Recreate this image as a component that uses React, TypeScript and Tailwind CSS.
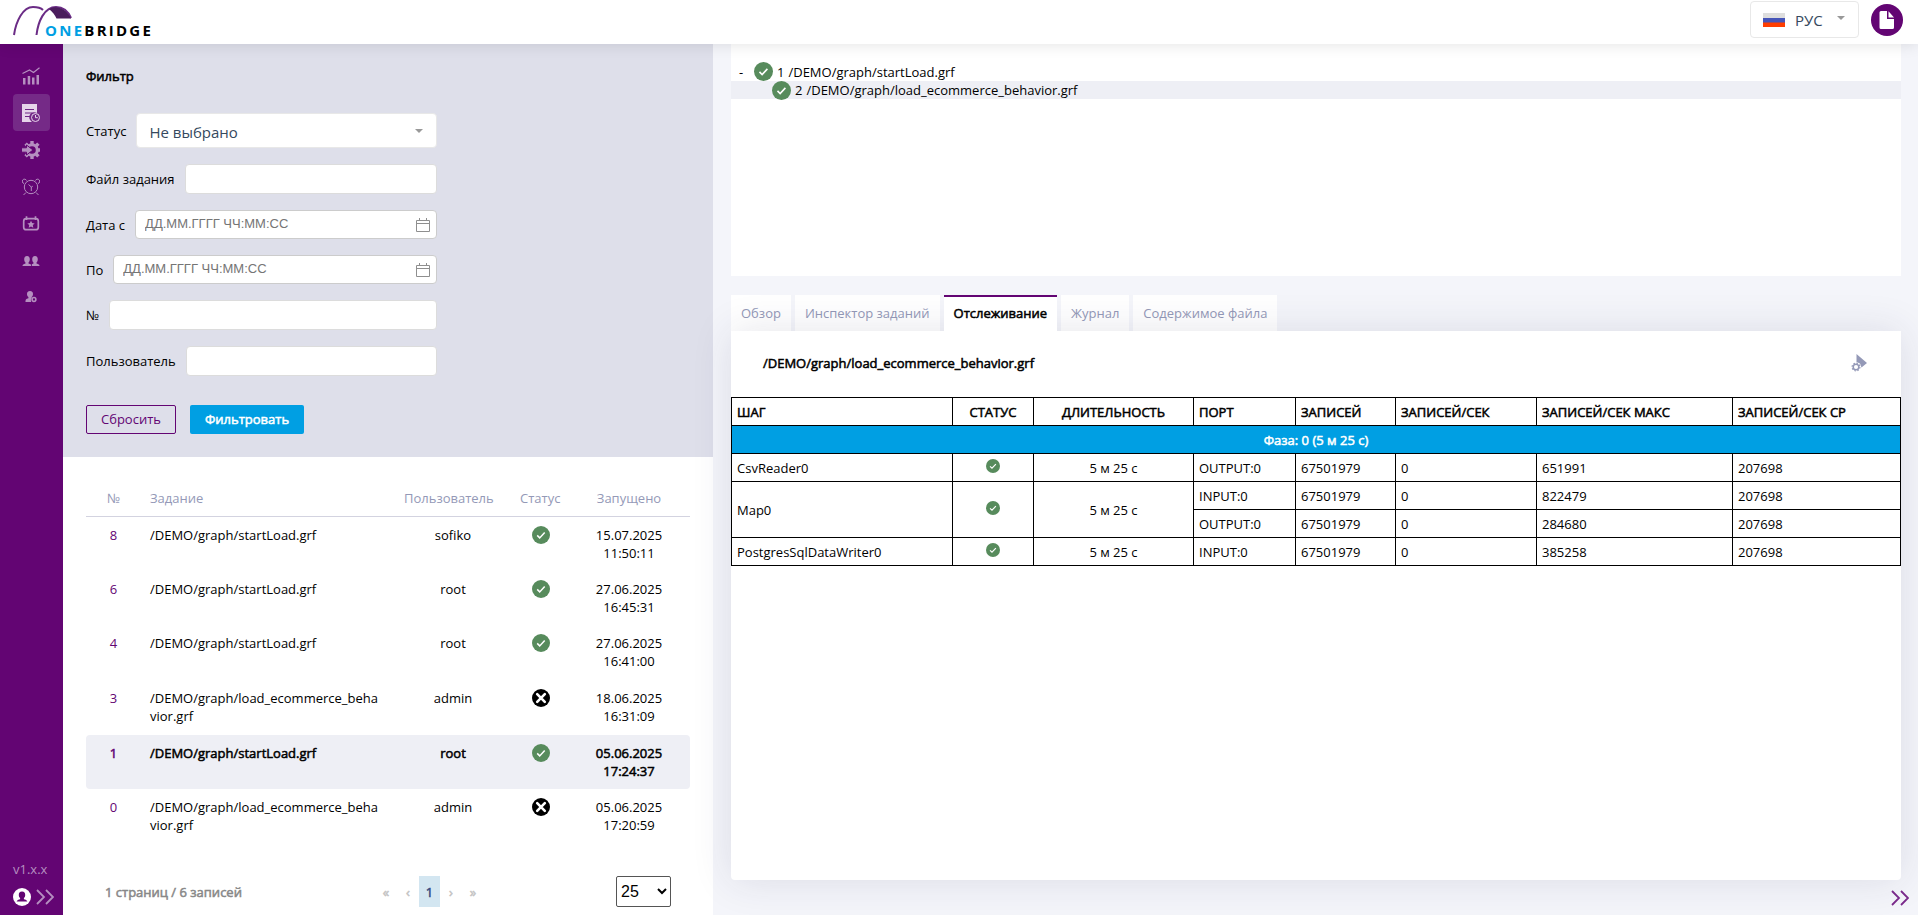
import { useState, type ReactNode } from "react";
import clsx from "clsx";

type Status = "ok" | "error";

type Job = {
    id: number;
    path: string;
    user: string;
    status: Status;
    date: string;
    time: string;
};

type Port = {
    name: string;
    records: string;
    rate: string;
    max: string;
    avg: string;
};

type Step = {
    name: string;
    duration: string;
    ports: Port[];
};

const jobs: Job[] = [
    { id: 8, path: "/DEMO/graph/startLoad.grf", user: "sofiko", status: "ok", date: "15.07.2025", time: "11:50:11" },
    { id: 6, path: "/DEMO/graph/startLoad.grf", user: "root", status: "ok", date: "27.06.2025", time: "16:45:31" },
    { id: 4, path: "/DEMO/graph/startLoad.grf", user: "root", status: "ok", date: "27.06.2025", time: "16:41:00" },
    { id: 3, path: "/DEMO/graph/load_ecommerce_behavior.grf", user: "admin", status: "error", date: "18.06.2025", time: "16:31:09" },
    { id: 1, path: "/DEMO/graph/startLoad.grf", user: "root", status: "ok", date: "05.06.2025", time: "17:24:37" },
    { id: 0, path: "/DEMO/graph/load_ecommerce_behavior.grf", user: "admin", status: "error", date: "05.06.2025", time: "17:20:59" },
];

const steps: Step[] = [
    {
        name: "CsvReader0",
        duration: "5 м 25 с",
        ports: [{ name: "OUTPUT:0", records: "67501979", rate: "0", max: "651991", avg: "207698" }],
    },
    {
        name: "Map0",
        duration: "5 м 25 с",
        ports: [
            { name: "INPUT:0", records: "67501979", rate: "0", max: "822479", avg: "207698" },
            { name: "OUTPUT:0", records: "67501979", rate: "0", max: "284680", avg: "207698" },
        ],
    },
    {
        name: "PostgresSqlDataWriter0",
        duration: "5 м 25 с",
        ports: [{ name: "INPUT:0", records: "67501979", rate: "0", max: "385258", avg: "207698" }],
    },
];

const tabs = ["Обзор", "Инспектор заданий", "Отслеживание", "Журнал", "Содержимое файла"];

// heavier text that keeps the width of the regular face
const strong = "[-webkit-text-stroke:0.04em_currentColor]";

function StatusIcon({ status, className }: { status: Status; className: string }) {
    if (status === "error") {
        return (
            <svg viewBox="0 0 18 18" className={className} role="img" aria-label="Ошибка">
                <circle cx="9" cy="9" r="9" fill="#000" />
                <path d="M5.200 5.200l7.600 7.600M12.800 5.200l-7.600 7.600" stroke="#fff" strokeWidth="2.600" strokeLinecap="round" />
            </svg>
        );
    }
    return (
        <svg viewBox="0 0 18 18" className={className} role="img" aria-label="Успешно">
            <circle cx="9" cy="9" r="9" fill="#578b5c" />
            <path d="M5.200 9.400l2.500 2.500 5-5.400" fill="none" stroke="#fff" strokeWidth="1.500" />
        </svg>
    );
}

function Logo() {
    return (
        <a href="#" className="relative block h-8 w-36" aria-label="OneBridge">
            <svg viewBox="0 0 60 30" className="h-[30px] w-[60px]" fill="none">
                <path d="M1 29C3 15 10 1 20 1c4 0 8 1 10 3" stroke="#6b2c86" strokeWidth="2" />
                <path d="M23.500 29C25 16 31 1 43 1c7 0 12 4 15 11" stroke="#6b2c86" strokeWidth="2" />
                <path d="M36 3c7-4 17-1 22 9.500H43.500C42 9 39.500 6 36 3z" fill="#4b1d5d" />
            </svg>
            <span className="absolute top-[15px] left-8 text-[15px] leading-[18px] font-bold tracking-[0.15em] text-black">
                <span className="text-[#009fe3]">ONE</span>BRIDGE
            </span>
        </a>
    );
}

function Caret() {
    return (
        <svg viewBox="0 0 8 4" className="h-1 w-2" fill="#999">
            <path d="M0 0h8L4 4z" />
        </svg>
    );
}

function DoubleChevron({ className }: { className: string }) {
    return (
        <svg viewBox="0 0 18 16" className={className} fill="none" stroke="currentColor">
            <path d="M1 1l7 7-7 7M10 1l7 7-7 7" strokeWidth="1.800" />
        </svg>
    );
}

function CalendarIcon() {
    return (
        <svg viewBox="0 0 14 14" className="h-3.5 w-3.5" fill="none" stroke="#8f8f8f">
            <path d="M.5 2.500h13v11H.5zM.5 5.500h13M3.500 0v2.500M10.500 0v2.500" />
        </svg>
    );
}

const navItems: { label: string; icon: ReactNode }[] = [
    {
        label: "Статистика",
        icon: (
            <svg viewBox="0 0 18 18" className="h-[18px] w-[18px]">
                <path d="M.5 6.500L7.500 3l4 2.500L17.500.8" fill="none" stroke="currentColor" strokeWidth="1.200" />
                <path d="M1 11h2.500v6.500H1zM5.700 9h2.500v8.500H5.700zM10 10.500h2.500v7H10zM14.500 8H17v9.500h-2.500z" fill="currentColor" />
            </svg>
        ),
    },
    {
        label: "Журнал выполнения",
        icon: (
            <svg viewBox="0 0 18 18" className="h-[18px] w-[18px]">
                <path d="M0 0h15v9a5 5 0 0 0-5.500 8.500l.3.5H0z" fill="currentColor" />
                <path d="M3 5.500h9M3 9h7.500M3 12.500h6" stroke="#6f2785" />
                <circle cx="13.500" cy="13.500" r="4" fill="none" stroke="currentColor" />
                <path d="M13.500 11v2.700h2.300" fill="none" stroke="currentColor" />
            </svg>
        ),
    },
    {
        label: "Запуск",
        icon: (
            <svg viewBox="0 0 18 18" className="h-[18px] w-[18px]">
                <circle cx="10" cy="9" r="5.300" fill="none" stroke="currentColor" strokeWidth="3" />
                <path
                    d="M10 0v3M10 15v3M19 9h-3M3.600 2.600l2.200 2.200M16.400 2.600l-2.200 2.200M3.600 15.400l2.200-2.200M16.400 15.400l-2.200-2.200"
                    stroke="currentColor"
                    strokeWidth="3.400"
                />
                <path d="M-1 6.800h5.500V4L11 9l-6.500 5v-2.800H-1z" fill="currentColor" stroke="#630573" />
            </svg>
        ),
    },
    {
        label: "Расписание",
        icon: (
            <svg viewBox="0 0 18 18" className="h-[18px] w-[18px]" fill="none" stroke="currentColor">
                <circle cx="9" cy="9" r="6.700" />
                <path d="M4.500 2.500A2.200 2.200 0 1 0 2 5.500M13.500 2.500A2.200 2.200 0 1 1 16 5.500M4 14.500L1.500 17M14 14.500l2.500 2.500M6.500 6.500L9.300 9v4M9.300 9l1.500-.8" />
            </svg>
        ),
    },
    {
        label: "События",
        icon: (
            <svg viewBox="0 0 18 18" className="h-[18px] w-[18px]">
                <rect x="1.700" y="3.700" width="14.600" height="11" rx="2.500" fill="none" stroke="currentColor" strokeWidth="1.700" />
                <path d="M4.500 1.200V5M13.500 1.200V5" stroke="currentColor" strokeWidth="1.700" />
                <path d="M9 5.800l1.100 2.300 2.600.3-1.900 1.700.5 2.600L9 11.400l-2.300 1.300.5-2.600-1.900-1.700 2.600-.3z" fill="currentColor" />
            </svg>
        ),
    },
    {
        label: "Пользователи",
        icon: (
            <svg viewBox="0 0 18 18" className="h-[18px] w-[18px]" fill="currentColor">
                <path d="M5 4c2 0 2.800 1.400 2.800 3.200 0 1.400-.6 2.600-1.300 3.200v1L9 12.500V14H.5c0-1.700 1-2 3-2.600v-1C2.700 9.800 2.200 8.600 2.200 7.200 2.200 5.400 3 4 5 4z" />
                <path d="M13 4c2 0 2.800 1.400 2.800 3.200 0 1.400-.6 2.600-1.300 3.200v1c2 .6 3 .9 3 2.600h-7.700v-1.700l1.700-.9v-1c-.8-.6-1.300-1.800-1.300-3.200C10.200 5.400 11 4 13 4z" />
            </svg>
        ),
    },
    {
        label: "Права",
        icon: (
            <svg viewBox="0 0 18 18" className="h-[18px] w-[18px]">
                <path
                    d="M8 2c2.200 0 3 1.400 3 3 0 1.500-.5 2.400-1.300 3v1a3.700 3.700 0 0 0-.5 4H3.500c0-2.800.5-3 2.900-3.800V8C5.500 7.400 5 6.500 5 5c0-1.600.8-3 3-3z"
                    fill="currentColor"
                />
                <circle cx="12" cy="10.500" r="1.900" fill="none" stroke="currentColor" strokeWidth="1.500" />
            </svg>
        ),
    },
];

function Sidebar() {
    return (
        <aside className="flex w-[63px] shrink-0 flex-col justify-between bg-[#630573] text-[#b58fc0]">
            <nav className="flex flex-col items-center pt-[13px]">
                {navItems.map((item, index) => (
                    <a
                        key={item.label}
                        href="#"
                        aria-label={item.label}
                        className={clsx(
                            "flex h-[37px] w-[37px] items-center justify-center rounded pr-px",
                            index === 1 && "bg-[#752a87] text-[#e6d5ea]"
                        )}
                    >
                        {item.icon}
                    </a>
                ))}
            </nav>
            <div className="px-[13px] pb-[9px]">
                <p className="leading-[18px]">v1.x.x</p>
                <div className="mt-2.5 flex items-center gap-[5px]">
                    <button type="button" aria-label="Профиль" className="shrink-0">
                        <svg viewBox="0 0 18 18" className="h-[18px] w-[18px]">
                            <circle cx="9" cy="9" r="9" fill="#fff" />
                            <path
                                d="M9 3.500c2.400 0 3.200 1.600 3.200 3.400 0 1.500-.6 2.500-1.300 3.200v1.100c1.500.5 3.100.9 3.500 2.300H3.600c.4-1.400 2-1.800 3.500-2.300v-1.100C6.400 9.400 5.800 8.400 5.800 6.900c0-1.800.8-3.400 3.200-3.400z"
                                fill="#630573"
                            />
                        </svg>
                    </button>
                    <button type="button" aria-label="Развернуть меню" className="shrink-0">
                        <DoubleChevron className="h-4 w-[18px]" />
                    </button>
                </div>
            </div>
        </aside>
    );
}

function Field({ id, label, children }: { id: string; label: string; children: ReactNode }) {
    return (
        <div className="flex items-center gap-2.5">
            <label htmlFor={id} className="shrink-0">
                {label}
            </label>
            {children}
        </div>
    );
}

function TextField({ id, label }: { id: string; label: string }) {
    return (
        <Field id={id} label={label}>
            <input id={id} type="text" className="h-[30px] w-0 grow rounded border border-[#dcdcdc] bg-white px-2 outline-none" />
        </Field>
    );
}

function DateField({ id, label }: { id: string; label: string }) {
    return (
        <Field id={id} label={label}>
            <div className="relative grow">
                <input
                    id={id}
                    type="text"
                    placeholder="ДД.ММ.ГГГГ ЧЧ:ММ:СС"
                    className="block h-[29px] w-full rounded border border-[#ccc] bg-white px-[9px] pb-0.5 font-['Liberation_Sans',sans-serif] text-[13px] outline-none placeholder:text-[#757575]"
                />
                <span className="pointer-events-none absolute inset-y-0 right-[7px] flex items-center">
                    <CalendarIcon />
                </span>
            </div>
        </Field>
    );
}

function Filter() {
    return (
        <form className="bg-[#dedfea] p-[23px]" onSubmit={(event) => event.preventDefault()}>
            <h2 className={strong}>Фильтр</h2>
            <div className="mt-7 flex w-[351px] flex-col gap-4">
                <Field id="status" label="Статус">
                    <div className="relative grow">
                        <select
                            id="status"
                            className="block h-[35px] w-full appearance-none rounded border border-[#e8e8e8] bg-white px-3 pt-0.5 text-[15px] text-[#35495e] outline-none"
                        >
                            <option>Не выбрано</option>
                        </select>
                        <span className="pointer-events-none absolute inset-y-0 right-3.5 flex items-center">
                            <Caret />
                        </span>
                    </div>
                </Field>
                <TextField id="file" label="Файл задания" />
                <DateField id="from" label="Дата с" />
                <DateField id="to" label="По" />
                <TextField id="number" label="№" />
                <TextField id="user" label="Пользователь" />
            </div>
            <div className="mt-[29px] flex gap-3.5">
                <button type="reset" className="h-[29px] rounded-xs border border-[#630573] px-3.5 pb-0.5 text-[#630573]">
                    Сбросить
                </button>
                <button type="submit" className={`h-[29px] rounded-xs bg-[#009fe3] px-[15px] pb-0.5 text-white ${strong}`}>
                    Фильтровать
                </button>
            </div>
        </form>
    );
}

function JobList() {
    const [selected, setSelected] = useState(1);

    return (
        <section className="px-[23px] pt-[23px]">
            <table className="h-[364px] w-full table-fixed">
                <colgroup>
                    <col className="w-[55px]" />
                    <col className="w-[254px]" />
                    <col className="w-[116px]" />
                    <col className="w-[59px]" />
                    <col className="w-[120px]" />
                </colgroup>
                <thead>
                    <tr className="h-9 border-b border-[#d3d3e0] text-[#9499b7]">
                        <th className="font-normal">№</th>
                        <th className="pl-[9px] text-left font-normal">Задание</th>
                        <th className="pl-[9px] text-left font-normal">Пользователь</th>
                        <th className="pl-[9px] text-left font-normal">Статус</th>
                        <th className="pr-0.5 font-normal">Запущено</th>
                    </tr>
                </thead>
                <tbody>
                    {jobs.map((job) => (
                        <tr
                            key={job.id}
                            onClick={() => setSelected(job.id)}
                            className={clsx("h-[54px] cursor-pointer align-top", job.id === selected && `bg-[#eeeff5] ${strong}`)}
                        >
                            <td className="rounded-l pt-[9px] text-center text-[#630573]">{job.id}</td>
                            <td className="pt-[9px] pr-4 pl-[9px] break-all">{job.path}</td>
                            <td className="pt-[9px] text-center">{job.user}</td>
                            <td className="pt-[9px]">
                                <StatusIcon status={job.status} className="mx-auto h-[18px] w-[18px]" />
                            </td>
                            <td className="rounded-r pt-[9px] pr-0.5 text-center">
                                {job.date}
                                <br />
                                {job.time}
                            </td>
                        </tr>
                    ))}
                </tbody>
            </table>
            <div className="mt-8 flex h-[31px] items-center justify-between px-[19px]">
                <p className={`w-[270px] text-[#888] ${strong}`}>1 страниц / 6 записей</p>
                <nav className={`flex grow items-center text-[#c4c4c4] ${strong}`}>
                    <button type="button" className="w-[22px]">«</button>
                    <button type="button" className="w-[22px]">‹</button>
                    <button type="button" className="h-[31px] w-[21px] bg-[#d3e6f1] text-[#35497f]">1</button>
                    <button type="button" className="w-[22px]">›</button>
                    <button type="button" className="w-[22px]">»</button>
                </nav>
                <select
                    aria-label="Записей на странице"
                    className="h-[31px] w-[55px] rounded-xs border border-[#555] bg-white font-['Liberation_Sans',sans-serif] text-[16px] text-black"
                >
                    <option>25</option>
                    <option>50</option>
                </select>
            </div>
        </section>
    );
}

function JobTree() {
    return (
        <section className="h-[232px] bg-white pt-[18px]">
            <div className="flex h-[19px] items-center gap-1 pl-2">
                <button type="button" className="w-[11px] text-left">-</button>
                <StatusIcon status="ok" className="h-[19px] w-[19px]" />
                <span>1</span>
                <span>/DEMO/graph/startLoad.grf</span>
            </div>
            <div className="flex h-[18px] items-center gap-1 bg-[#eeeff5] pl-[41px]">
                <StatusIcon status="ok" className="h-[19px] w-[19px]" />
                <span>2</span>
                <span>/DEMO/graph/load_ecommerce_behavior.grf</span>
            </div>
        </section>
    );
}

function Tracking() {
    return (
        <section className="relative grow rounded-b bg-white shadow-[0_0_40px_rgba(40,40,80,0.12)]">
            <div className="flex h-16 items-center justify-between pr-[33px] pl-8">
                <h2 className={strong}>/DEMO/graph/load_ecommerce_behavior.grf</h2>
                <button type="button" aria-label="Запустить с параметрами">
                    <svg viewBox="0 0 17 18" className="h-[18px] w-[17px]">
                        <path d="M5.500 0L16 9l-5.500 4.500L9 9.500 5.500 8z" fill="#9499b7" />
                        <circle cx="5" cy="13" r="2.800" fill="none" stroke="#9499b7" strokeWidth="1.500" />
                        <circle cx="5" cy="13" r="3.900" fill="none" stroke="#9499b7" strokeWidth="1.200" strokeDasharray="1.500 1.560" />
                    </svg>
                </button>
            </div>
            <table className="mt-0.5 w-full border-collapse text-left [&_td]:border [&_td]:border-black [&_td]:px-[5px] [&_th]:border [&_th]:border-black [&_th]:px-[5px] [&_th]:font-normal [&_tr]:h-7">
                <colgroup>
                    <col className="w-[221px]" />
                    <col className="w-[81px]" />
                    <col className="w-[160px]" />
                    <col className="w-[102px]" />
                    <col className="w-[100px]" />
                    <col className="w-[141px]" />
                    <col className="w-[196px]" />
                    <col className="w-[168px]" />
                </colgroup>
                <thead>
                    <tr className={strong}>
                        <th>ШАГ</th>
                        <th className="text-center">СТАТУС</th>
                        <th className="text-center">ДЛИТЕЛЬНОСТЬ</th>
                        <th>ПОРТ</th>
                        <th>ЗАПИСЕЙ</th>
                        <th>ЗАПИСЕЙ/СЕК</th>
                        <th>ЗАПИСЕЙ/СЕК МАКС</th>
                        <th>ЗАПИСЕЙ/СЕК СР</th>
                    </tr>
                </thead>
                <tbody>
                    <tr className={`bg-[#009fe3] text-white ${strong}`}>
                        <td colSpan={8} className="text-center">Фаза: 0 (5 м 25 с)</td>
                    </tr>
                    {steps.map((step) =>
                        step.ports.map((port, index) => (
                            <tr key={`${step.name}-${port.name}`}>
                                {index === 0 ? (
                                    <>
                                        <td rowSpan={step.ports.length}>{step.name}</td>
                                        <td rowSpan={step.ports.length}>
                                            <StatusIcon status="ok" className="mx-auto mb-1 h-3.5 w-3.5" />
                                        </td>
                                        <td rowSpan={step.ports.length} className="text-center">{step.duration}</td>
                                    </>
                                ) : null}
                                <td>{port.name}</td>
                                <td>{port.records}</td>
                                <td>{port.rate}</td>
                                <td>{port.max}</td>
                                <td>{port.avg}</td>
                            </tr>
                        ))
                    )}
                </tbody>
            </table>
        </section>
    );
}

export default function App() {
    const [activeTab, setActiveTab] = useState("Отслеживание");

    return (
        <div className="flex min-h-screen flex-col bg-[#f4f5fa] font-['Open_Sans','Noto_Sans',sans-serif] text-[13px] leading-[18px] text-black">
            <header className="relative z-10 flex h-11 items-start justify-between bg-white pr-[15px] pl-[13px] shadow-[0_0_16px_rgba(0,0,0,0.12)]">
                <div className="pt-1.5">
                    <Logo />
                </div>
                <div className="flex items-center gap-3 pt-px">
                    <div className="relative">
                        <select
                            aria-label="Язык"
                            className="block h-[37px] w-[109px] appearance-none rounded border border-[#e8e8e8] bg-white pl-11 text-[15px] text-[#35495e] outline-none"
                        >
                            <option>РУС</option>
                        </select>
                        <span className="pointer-events-none absolute inset-y-0 left-[13px] flex items-center">
                            <svg viewBox="0 0 22 14" className="h-3.5 w-[22px]">
                                <path fill="#dedede" d="M0 0h22v5H0z" />
                                <path fill="#4655b8" d="M0 5h22v5H0z" />
                                <path fill="#ff3d00" d="M0 9.500h22V14H0z" />
                            </svg>
                        </span>
                        <span className="pointer-events-none absolute inset-y-0 right-3.5 flex items-center pb-1">
                            <Caret />
                        </span>
                    </div>
                    <button type="button" aria-label="Документация">
                        <svg viewBox="0 0 32 32" className="h-8 w-8">
                            <circle cx="16" cy="16" r="16" fill="#630573" />
                            <path d="M10 7h6v8h7v8.500a1.500 1.500 0 0 1-1.500 1.500H10a1.500 1.500 0 0 1-1.500-1.500v-15A1.500 1.500 0 0 1 10 7z" fill="#fff" />
                            <path d="M17.500 7.300l5.500 6.200h-5.500z" fill="#fff" />
                        </svg>
                    </button>
                </div>
            </header>
            <div className="flex grow">
                <Sidebar />
                <div className="w-[650px] shrink-0 bg-white">
                    <Filter />
                    <JobList />
                </div>
                <main className="flex grow flex-col pr-[17px] pl-[18px]">
                    <JobTree />
                    <div role="tablist" className="mt-[19px] flex gap-1">
                        {tabs.map((tab) => (
                            <button
                                key={tab}
                                type="button"
                                role="tab"
                                aria-selected={tab === activeTab}
                                onClick={() => setActiveTab(tab)}
                                className={clsx(
                                    "h-9 border-t-2 bg-white px-2.5 pb-0.5",
                                    tab === activeTab ? `relative z-10 border-[#630573] ${strong}` : "border-white text-[#9499b7]"
                                )}
                            >
                                {tab}
                            </button>
                        ))}
                    </div>
                    <Tracking />
                    <div className="-mr-2 flex h-[35px] shrink-0 items-center justify-end text-[#7b2a8c]">
                        <button type="button" aria-label="Свернуть панель">
                            <DoubleChevron className="h-4 w-[18px]" />
                        </button>
                    </div>
                </main>
            </div>
        </div>
    );
}
